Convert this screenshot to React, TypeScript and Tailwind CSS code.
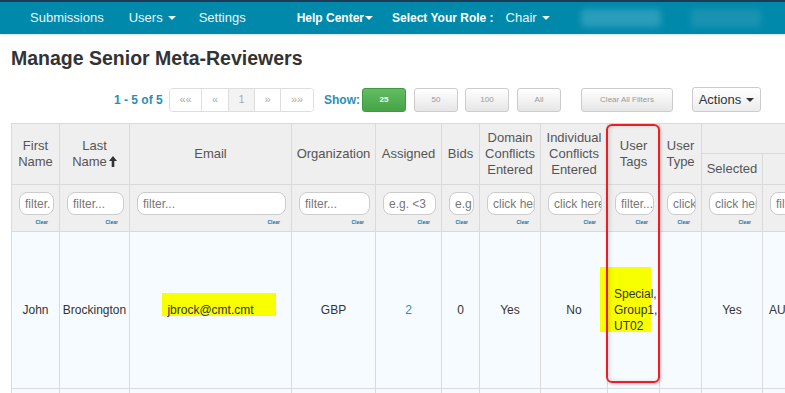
import React from 'react';

const COLS = [48, 70, 162, 84, 66, 38, 61, 67, 52, 42, 61, 90, 90];

const FILTERS = [
  'filter.',
  'filter...',
  'filter...',
  'filter...',
  'e.g. <3',
  'e.g',
  'click here',
  'click here',
  'filter...',
  'click',
  'click here',
  'filter...',
  'filter...',
];

function Caret({ ml = 'ml-[5px]' }: { ml?: string }) {
  return <span className={`${ml} inline-block h-0 w-0 border-x-[4px] border-t-[4px] border-x-transparent border-t-current align-middle`} />;
}

function NavBar() {
  return (
    <div className="h-[34px] border-t-2 border-[#1d3b56] bg-[#0089ab] shadow-[0_1px_2px_rgba(0,0,0,0.15)]">
      <div className="flex h-full items-center whitespace-nowrap text-[13px] text-[#eaf5f8]">
        <span className="ml-[30px]">Submissions</span>
        <span className="ml-[25px] flex items-center">Users<Caret /></span>
        <span className="ml-[23px]">Settings</span>
        <span className="ml-[51px] flex items-center text-[12px] font-bold text-white">Help Center<Caret ml="ml-[1px]" /></span>
        <span className="ml-[19px] text-[12px] font-bold text-white">Select Your Role :</span>
        <span className="ml-[12px] flex items-center">Chair<Caret /></span>
        <span className="ml-[31px] h-[18px] w-[80px] shrink-0 rounded bg-[#2a9dbb] blur-[3px]" />
        <span className="ml-[30px] h-[18px] w-[70px] shrink-0 rounded bg-[#1a93b2] blur-[3px]" />
      </div>
    </div>
  );
}

function PageBtn({ label, active, w }: { label: string; active?: boolean; w: string }) {
  return (
    <span className={`flex h-full items-center justify-center border-r border-[#ddd] text-[11px] text-[#aaa] last:border-r-0 ${w} ${active ? 'bg-[#f3f3f3] text-[#999]' : 'bg-white'}`}>
      {label}
    </span>
  );
}

function GrayBtn({ label, w, ml }: { label: string; w: string; ml: string }) {
  return (
    <span className={`flex h-[24px] shrink-0 items-center justify-center rounded-[3px] border border-[#ccc] bg-gradient-to-b from-white to-[#e6e6e6] text-[8px] text-[#999] ${w} ${ml}`}>
      {label}
    </span>
  );
}

function Toolbar() {
  return (
    <div className="mt-[17px] flex h-[25px] items-center whitespace-nowrap">
      <span className="ml-[114px] w-[47px] text-[12px] font-bold text-[#2a8fb8]">1 - 5 of 5</span>
      <div className="ml-[8px] flex h-[24px] overflow-hidden rounded-[4px] border border-[#ddd]">
        <PageBtn label="««" w="w-[32px]" />
        <PageBtn label="«" w="w-[27px]" />
        <PageBtn label="1" active w="w-[26px]" />
        <PageBtn label="»" w="w-[26px]" />
        <PageBtn label="»»" w="w-[32px]" />
      </div>
      <span className="ml-[10px] w-[35px] text-[12px] font-bold text-[#2a8fb8]">Show:</span>
      <span className="ml-[3px] flex h-[24px] w-[44px] items-center justify-center rounded-[3px] border border-[#3e9a3e] bg-gradient-to-b from-[#62bd62] to-[#46a346] text-[8px] font-bold text-white">25</span>
      <GrayBtn label="50" w="w-[44px]" ml="ml-[8px]" />
      <GrayBtn label="100" w="w-[44px]" ml="ml-[7px]" />
      <GrayBtn label="All" w="w-[44px]" ml="ml-[8px]" />
      <GrayBtn label="Clear All Filters" w="w-[92px]" ml="ml-[20px]" />
      <span className="ml-[19px] flex h-[25px] w-[69px] items-center justify-center rounded-[3px] border border-[#ccc] bg-gradient-to-b from-white to-[#ececec] text-[13px] text-[#333]">
        Actions<Caret />
      </span>
    </div>
  );
}

function Th({ children, rowSpan = 2, colSpan = 1 }: { children?: React.ReactNode; rowSpan?: number; colSpan?: number }) {
  return (
    <th rowSpan={rowSpan} colSpan={colSpan} className="border border-[#dadada] bg-[#efefef] px-[2px] text-center align-middle text-[13px] font-normal leading-[16px] text-[#555]">
      {children}
    </th>
  );
}

function FilterCell({ ph }: { ph: string }) {
  return (
    <td className="border border-[#dadada] bg-[#efefef] pl-[7px] pr-[5px] align-top">
      <div className="mt-[7px] flex h-[23px] items-center overflow-hidden whitespace-nowrap rounded-[8px] border border-[#ccc] bg-white pl-[5px] text-[12px] text-[#777]">
        {ph}
      </div>
      <div className="mt-[3px] pr-[6px] text-right text-[5px] font-bold leading-[8px] text-[#1c6fa3]">Clear</div>
    </td>
  );
}

function Td({ children, className = '' }: { children?: React.ReactNode; className?: string }) {
  return <td className={`border border-[#dadada] bg-[#f6fbff] text-[12px] text-[#333] ${className}`}>{children}</td>;
}

function UpArrow() {
  return (
    <svg className="ml-[2px] inline-block align-[-1px]" width="8" height="11" viewBox="0 0 8 11">
      <path d="M4 0 L8 5 L5.3 5 L5.3 11 L2.7 11 L2.7 5 L0 5 Z" fill="#333" />
    </svg>
  );
}

function DataTable() {
  return (
    <div className="relative mt-[11px] ml-[11px]">
      <table className="table-fixed border-collapse" style={{ width: COLS.reduce((a, b) => a + b, 0) }}>
        <colgroup>
          {COLS.map((w, i) => (
            <col key={i} style={{ width: w }} />
          ))}
        </colgroup>
        <thead>
          <tr className="h-[30px]">
            <Th>First<br />Name</Th>
            <Th>Last<br />Name<UpArrow /></Th>
            <Th>Email</Th>
            <Th>Organization</Th>
            <Th>Assigned</Th>
            <Th>Bids</Th>
            <Th>Domain<br />Conflicts<br />Entered</Th>
            <Th>Individual<br />Conflicts<br />Entered</Th>
            <Th>User<br />Tags</Th>
            <Th>User<br />Type</Th>
            <Th rowSpan={1} colSpan={3}></Th>
          </tr>
          <tr className="h-[31px]">
            <Th rowSpan={1}>Selected</Th>
            <Th rowSpan={1}></Th>
            <Th rowSpan={1}></Th>
          </tr>
          <tr className="h-[47px]">
            {FILTERS.map((f, i) => (
              <FilterCell key={i} ph={f} />
            ))}
          </tr>
        </thead>
        <tbody>
          <tr className="h-[157px] text-center align-middle">
            <Td>John</Td>
            <Td>Brockington</Td>
            <Td>
              <div className="relative">
                <span className="absolute top-[-8px] left-[32px] h-[23px] w-[114px] bg-[#f8ff00]" />
                <span className="relative">jbrock@cmt.cmt</span>
              </div>
            </Td>
            <Td>GBP</Td>
            <Td><span className="text-[#2a8fb8]">2</span></Td>
            <Td>0</Td>
            <Td>Yes</Td>
            <Td>No</Td>
            <Td className="text-left">
              <div className="relative">
                <span className="absolute top-[-19px] left-[-8px] h-[65px] w-[51px] bg-[#f8ff00]" />
                <span className="relative block pl-[6px] leading-[16px]">Special,<br />Group1,<br />UT02</span>
              </div>
            </Td>
            <Td></Td>
            <Td>Yes</Td>
            <Td className="pl-[6px] text-left">AUTO</Td>
            <Td></Td>
          </tr>
          <tr className="h-[20px]">
            {COLS.map((_, i) => (
              <Td key={i}></Td>
            ))}
          </tr>
        </tbody>
      </table>
      <div className="pointer-events-none absolute top-[1px] left-[595px] h-[259px] w-[54px] rounded-[6px] border-2 border-[#ee1c24] shadow-[inset_2px_0_4px_rgba(0,0,0,0.12),1px_1px_3px_rgba(0,0,0,0.25)]" />
    </div>
  );
}

export default function App() {
  return (
    <div className="h-[393px] w-[785px] overflow-hidden bg-white font-['Liberation_Sans',Arial,sans-serif]">
      <NavBar />
      <h1 className="mt-[12px] ml-[11px] text-[19.5px] font-bold leading-[24px] text-[#333]">Manage Senior Meta-Reviewers</h1>
      <Toolbar />
      <DataTable />
    </div>
  );
}
